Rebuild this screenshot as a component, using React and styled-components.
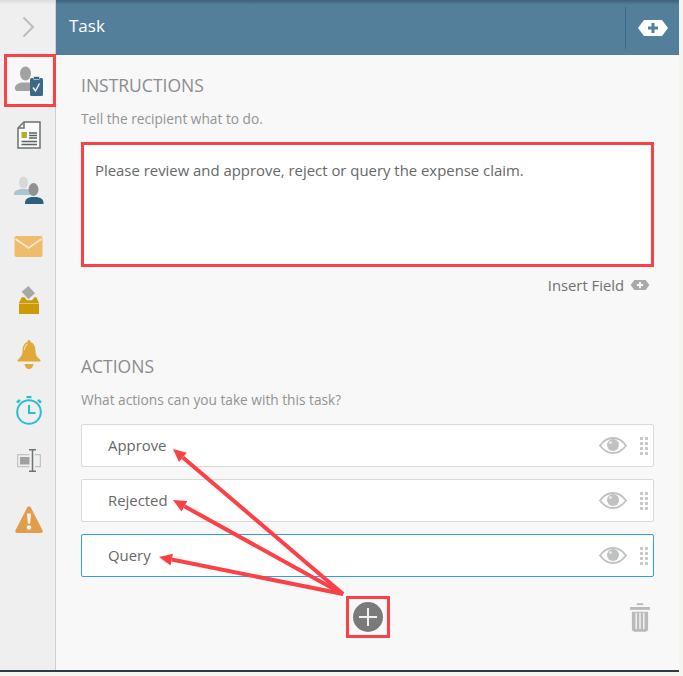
import React from "react";
import styled, { createGlobalStyle } from "styled-components";

const GlobalStyle = createGlobalStyle`
  html, body {
    margin: 0;
    padding: 0;
    background: #f3f4ec;
  }
  body {
    font-family: "Open Sans", "Noto Sans", sans-serif;
  }
`;

const Frame = styled.div`
  position: relative;
  width: 683px;
  height: 676px;
  overflow: hidden;
  background: #f4f5ee;
`;

const Window = styled.div`
  display: flex;
  width: 679px;
  height: 670px;
  border-bottom: 2px solid #2f3a42;
`;

const Sidebar = styled.div`
  width: 55px;
  flex: none;
  background: linear-gradient(#dcdcdc 0, #efefef 5px);
  border-right: 1px solid #cfcfcf;
  display: flex;
  flex-direction: column;
  align-items: center;
`;

const SideItem = styled.div`
  box-sizing: border-box;
  width: 52px;
  height: ${(p) => p.$h}px;
  margin-left: 4px;
  flex: none;
  display: flex;
  align-items: center;
  justify-content: center;
  padding-right: 2px;
  background: ${(p) => (p.$active ? "#f8f8f8" : "transparent")};
  border: ${(p) => (p.$active ? "3px solid #fb4146" : "0")};
`;

const Main = styled.div`
  flex: 1;
  min-width: 0;
  background: #f8f8f8;
  display: flex;
  flex-direction: column;
`;

const Header = styled.div`
  height: 55px;
  flex: none;
  box-sizing: border-box;
  background: linear-gradient(#3f6179 0, #547f9a 5px);
  display: flex;
  align-items: center;
  justify-content: space-between;
  padding: 0 11px 5px 13px;
  color: #fff;
  font-size: 17px;
`;

const HeaderAdd = styled.div`
  height: 42px;
  border-left: 1px solid #3f6a85;
  margin-top: 5px;
  padding-left: 12px;
  display: flex;
  align-items: center;
`;

const Content = styled.div`
  flex: 1;
  padding: 0 25px;
  display: flex;
  flex-direction: column;
`;

const SectionTitle = styled.div`
  font-size: 17.5px;
  line-height: 22px;
  color: #8b8d8d;
  margin-top: ${(p) => p.$top}px;
`;

const Hint = styled.div`
  font-size: 13.7px;
  line-height: 18px;
  color: #929494;
  margin-top: 14px;
`;

const TextBox = styled.div`
  box-sizing: border-box;
  height: 125px;
  margin-top: 14px;
  background: #fff;
  border: 3px solid #fb4146;
  padding: 15px 11px;
  font-size: 14.9px;
  line-height: 20px;
  color: #656868;
`;

const InsertField = styled.div`
  display: flex;
  justify-content: flex-end;
  align-items: center;
  gap: 6px;
  margin-top: 8px;
  padding-right: 4px;
  font-size: 14.8px;
  line-height: 20px;
  color: #6f7272;
`;

const ActionList = styled.div`
  display: flex;
  flex-direction: column;
  gap: 12px;
  margin-top: 15px;
`;

const ActionRow = styled.div`
  box-sizing: border-box;
  height: 43px;
  display: flex;
  align-items: center;
  background: #fff;
  border: 1px solid ${(p) => (p.$focused ? "#2f9bf5" : "#d9d9d9")};
  border-radius: 2px;
  padding: 0 5px 0 26px;
  font-size: 14.9px;
  color: #656868;
`;

const ActionLabel = styled.span`
  flex: 1;
  margin-top: -2px;
`;

const Footer = styled.div`
  position: relative;
  display: flex;
  justify-content: flex-end;
  margin-top: 25px;
  padding-right: 4px;
`;

const AddHighlight = styled.div`
  position: absolute;
  left: 265px;
  top: -6px;
  box-sizing: border-box;
  width: 44px;
  height: 42px;
  border: 3px solid #fb4146;
  display: flex;
  align-items: center;
  justify-content: center;
`;

const Overlay = styled.svg`
  position: absolute;
  left: 0;
  top: 0;
  pointer-events: none;
`;

const Chevron = () => (
  <svg width="13" height="22" viewBox="0 0 13 22">
    <path d="M1.500 1.500l9.500 9.500-9.500 9.500" fill="none" stroke="#bcbcbc" strokeWidth="2" />
  </svg>
);

const TaskIcon = () => (
  <svg width="28" height="30" viewBox="0 0 28 30">
    <ellipse cx="10.500" cy="7.500" rx="5.500" ry="7" fill="#a2a2a2" />
    <path d="M0 22c0-3 2.500-4.500 6-5.500h9l1 8.500H2c-1.200 0-2-1-2-3z" fill="#a2a2a2" />
    <rect x="15" y="12" width="13" height="18" rx="1.500" fill="#3b6a88" />
    <rect x="18.500" y="10.500" width="6" height="3" rx=".8" fill="#3b6a88" stroke="#f8f8f8" strokeWidth=".6" />
    <path d="M18 21.500l2.500 3.500 4-7.500" fill="none" stroke="#f4f7f9" strokeWidth="1.400" />
  </svg>
);

const FormIcon = () => (
  <svg width="24" height="28" viewBox="0 0 24 28">
    <path d="M7 1h16v26H1V7z" fill="#fafafa" stroke="#6a7272" strokeWidth="1.500" />
    <path d="M7 1v6H1" fill="none" stroke="#6a7272" strokeWidth="1.500" />
    <rect x="4.500" y="11" width="5.500" height="6" fill="#adb22a" />
    <path d="M12 12h8M12 14.500h8M12 17h8M4.500 20.500h15.500M4.500 23.500h15.500" stroke="#5a6464" strokeWidth="1.400" />
  </svg>
);

const UsersIcon = () => (
  <svg width="30" height="28" viewBox="0 0 30 28">
    <ellipse cx="9.500" cy="6.500" rx="4.500" ry="6" fill="#d8d8d8" />
    <path d="M0 18c0-3 3-4 6-5h7c3 1 5 2 5 5v1H0z" fill="#aac4d4" />
    <ellipse cx="19.500" cy="13.500" rx="5" ry="6.500" fill="#919191" />
    <path d="M11 27c0-4 2.500-5 6-6h6c4 1 6.500 2 6.500 6v1H11z" fill="#2b607f" />
  </svg>
);

const MailIcon = () => (
  <svg width="29" height="21" viewBox="0 0 29 21">
    <rect x=".5" y="0" width="28" height="21" rx="2" fill="#efbc6c" />
    <path d="M1.500 3l13 9 13-9" fill="none" stroke="#fbeacd" strokeWidth="1.800" />
  </svg>
);

const BoxIcon = () => (
  <svg width="20" height="28" viewBox="0 0 20 28">
    <path d="M2.700 5.700L9.300 0 16 7.300l-6.700 6z" fill="#a8a8a8" />
    <path d="M2.700 11.300h2.800l2.500 3h5l2.500-3h1.800L20 17H0z" fill="#cc9a06" />
    <rect x="0" y="17.500" width="20" height="10.500" fill="#cc9a06" />
  </svg>
);

const BellIcon = () => (
  <svg width="24" height="29" viewBox="0 0 24 29">
    <path d="M12 0c1 0 1.400.6 1.400 2 3.300 1 5 4 5 8 0 5 1.600 7 4.800 9.800.7.700.5 1.700-.5 1.700H1.300c-1 0-1.200-1-.5-1.700C4 17 5.600 15 5.600 10c0-4 1.700-7 5-8 0-1.400.4-2 1.400-2z" fill="#dfaa38" />
    <path d="M7.500 10c0-3 1.200-5 3-6" fill="none" stroke="#f3dca6" strokeWidth="1.200" />
    <path d="M7.500 24h9c-.5 3-2.200 5-4.500 5s-4-2-4.500-5z" fill="#dfaa38" />
  </svg>
);

const TimerIcon = () => (
  <svg width="26" height="29" viewBox="0 0 26 29">
    <circle cx="13" cy="16" r="11.800" fill="none" stroke="#2bbdd2" strokeWidth="2" />
    <rect x="10.500" y="0" width="5" height="2.200" fill="#2bbdd2" />
    <path d="M1 6.500l3-2.500M25 6.500l-3-2.500" stroke="#2bbdd2" strokeWidth="2.400" />
    <path d="M13 9v8h6.500" fill="none" stroke="#2bbdd2" strokeWidth="2" />
  </svg>
);

const InputIcon = () => (
  <svg width="24" height="23" viewBox="0 0 24 23">
    <rect x=".7" y="5.700" width="22.600" height="12" fill="none" stroke="#b8b8b8" />
    <rect x="3" y="8" width="10" height="7.500" fill="#a0a0a0" />
    <rect x="12.500" y="1" width="5.500" height="21" fill="#efefef" />
    <path d="M12 .8h7M12 22.200h7M15.500 1v21" fill="none" stroke="#6c7373" strokeWidth="1.500" />
  </svg>
);

const WarningIcon = () => (
  <svg width="28" height="28" viewBox="0 0 28 28">
    <path d="M14 .5c1 0 1.600.5 2 1.300l11.500 22.500c.6 1.400 0 2.700-1.700 2.700H2.200C.5 27-.1 25.700.5 24.300L12 1.800C12.400 1 13 .5 14 .5z" fill="#e19c4d" />
    <path d="M12 7.500h4l-.8 10h-2.400z" fill="#fbf3e8" />
    <circle cx="14" cy="21.500" r="2.200" fill="#fbf3e8" />
  </svg>
);

const HexPlus = ({ w, h, fill, plus }) => (
  <svg width={w} height={h} viewBox="0 0 30 16">
    <path d="M6 0h18l6 8-6 8H6L0 8z" fill={fill} />
    <path d="M15 3v10M10 8h10" stroke={plus} strokeWidth="3" />
  </svg>
);

const EyeIcon = () => (
  <svg width="28" height="17" viewBox="0 0 28 17">
    <path d="M1 8.500C4.500 3.500 9 1 14 1s9.500 2.500 13 7.500c-3.500 5-8 7.500-13 7.500S4.500 13.500 1 8.500z" fill="none" stroke="#c0c1c1" strokeWidth="1.800" />
    <circle cx="14" cy="8" r="6" fill="#c0c1c1" />
    <circle cx="11.500" cy="5.500" r="1.600" fill="#e6e6e6" />
  </svg>
);

const DragIcon = () => (
  <svg width="8" height="18" viewBox="0 0 8 18" style={{ marginLeft: 13 }}>
    {[1.500, 6.500, 11.500, 16.500].map((y) => (
      <g key={y} fill="#c4c5c5">
        <rect x="0" y={y - 1.500} width="3" height="3" rx=".8" />
        <rect x="5" y={y - 1.500} width="3" height="3" rx=".8" />
      </g>
    ))}
  </svg>
);

const TrashIcon = () => (
  <svg width="20" height="29" viewBox="0 0 21 30" style={{ marginTop: 1 }}>
    <rect x="7" y="0" width="7" height="2" fill="#b9baba" />
    <rect x="0" y="4" width="21" height="3" fill="#b9baba" />
    <path d="M2 9h17v19l-2 2H4l-2-2z" fill="#b9baba" />
    <path d="M6.500 10v17M10.500 10v17M14.500 10v17" stroke="#f8f8f8" strokeWidth="1.400" />
  </svg>
);

const PlusIcon = () => (
  <svg width="30" height="30" viewBox="0 0 30 30">
    <circle cx="15" cy="15" r="15" fill="#7a7a7a" />
    <path d="M15 6v18M6 15h18" stroke="#f1f1f1" strokeWidth="2" />
  </svg>
);

const Arrow = ({ x, y }) => {
  const tx = 343;
  const ty = 594;
  const a = Math.atan2(ty - y, tx - x);
  const l = 13;
  const w = 6;
  const bx = x + Math.cos(a) * l;
  const by = y + Math.sin(a) * l;
  const nx = -Math.sin(a) * w;
  const ny = Math.cos(a) * w;
  return (
    <g>
      <line x1={tx} y1={ty} x2={bx} y2={by} stroke="#fb4146" strokeWidth="4" />
      <polygon
        points={`${x},${y} ${bx + nx},${by + ny} ${bx - nx},${by - ny}`}
        fill="#fb4146"
      />
    </g>
  );
};

const sideItems = [
  { h: 54, icon: <Chevron /> },
  { h: 53, icon: <TaskIcon />, active: true },
  { h: 56, icon: <FormIcon /> },
  { h: 54, icon: <UsersIcon /> },
  { h: 58, icon: <MailIcon /> },
  { h: 50, icon: <BoxIcon /> },
  { h: 58, icon: <BellIcon /> },
  { h: 54, icon: <TimerIcon /> },
  { h: 46, icon: <InputIcon /> },
  { h: 74, icon: <WarningIcon /> },
];

const actions = [
  { label: "Approve" },
  { label: "Rejected" },
  { label: "Query", focused: true },
];

export default function App() {
  return (
    <Frame>
      <GlobalStyle />
      <Window>
        <Sidebar>
          {sideItems.map((item, i) => (
            <SideItem key={i} $h={item.h} $active={item.active}>
              {item.icon}
            </SideItem>
          ))}
        </Sidebar>
        <Main>
          <Header>
            <span>Task</span>
            <HeaderAdd>
              <HexPlus w={30} h={16} fill="#fff" plus="#547f9a" />
            </HeaderAdd>
          </Header>
          <Content>
            <SectionTitle $top={19}>INSTRUCTIONS</SectionTitle>
            <Hint>Tell the recipient what to do.</Hint>
            <TextBox>Please review and approve, reject or query the expense claim.</TextBox>
            <InsertField>
              Insert Field
              <HexPlus w={20} h={10} fill="#a8a9a9" plus="#f8f8f8" />
            </InsertField>
            <SectionTitle $top={60}>ACTIONS</SectionTitle>
            <Hint>What actions can you take with this task?</Hint>
            <ActionList>
              {actions.map((a) => (
                <ActionRow key={a.label} $focused={a.focused}>
                  <ActionLabel>{a.label}</ActionLabel>
                  <EyeIcon />
                  <DragIcon />
                </ActionRow>
              ))}
            </ActionList>
            <Footer>
              <AddHighlight>
                <PlusIcon />
              </AddHighlight>
              <TrashIcon />
            </Footer>
          </Content>
        </Main>
      </Window>
      <Overlay width="683" height="676">
        <Arrow x={173} y={449} />
        <Arrow x={173} y={500} />
        <Arrow x={159} y={557} />
      </Overlay>
    </Frame>
  );
}
